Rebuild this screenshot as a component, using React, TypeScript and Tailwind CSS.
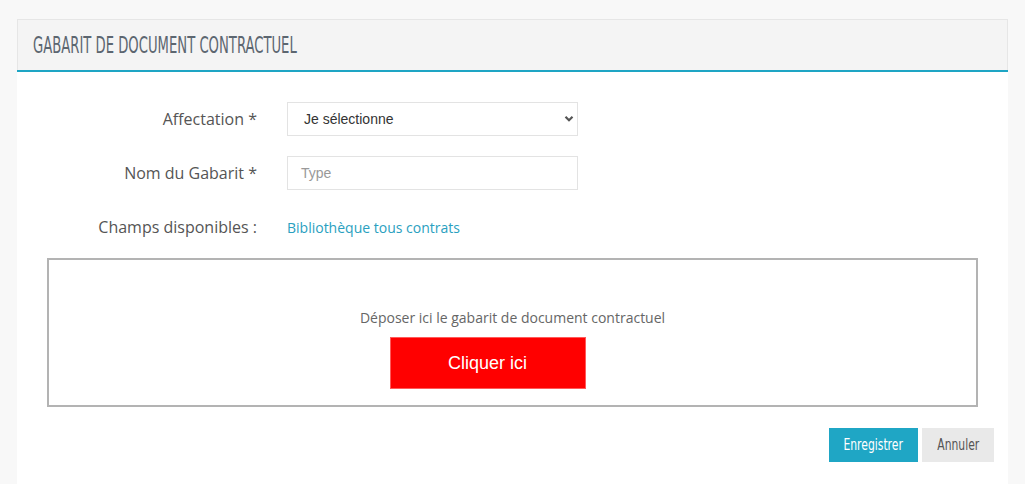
import React from "react";

const oswald = { fontFamily: '"DejaVu Sans Condensed", "Liberation Sans Narrow", "Liberation Sans", sans-serif' };

export default function App() {
  return (
    <div className="min-h-[484px] bg-[#f8f8f8] pt-[19px] pl-[17px] pr-[17px]" style={{ fontFamily: '"Open Sans", sans-serif' }}>
      <div className="bg-white h-[465px] flex flex-col">
        <div className="h-[51px] bg-[#f4f4f4] border border-[#e6e6e6] border-b-0 flex items-center pl-[15px]">
          <span className="text-[23px] font-light text-[#5c6670] origin-left scale-x-[0.637] inline-block whitespace-nowrap" style={oswald}>
            GABARIT DE DOCUMENT CONTRACTUEL
          </span>
        </div>
        <div className="h-[2px] bg-[#1ea5c4]" />
        <div className="flex flex-col pt-[30px]">
          <div className="flex items-center h-[34px]">
            <div className="w-[240px] text-right text-[16px] text-[#555]">Affectation *</div>
            <div className="ml-[30px] relative w-[291px] h-[34px]">
              <div className="w-full h-full border border-[#e3e3e3] bg-white flex items-center pl-[16px] text-[14px] text-[#333]" style={{ fontFamily: '"Liberation Sans", Arial, sans-serif' }}>
                Je sélectionne
              </div>
              <svg className="absolute right-[4px] top-[13px]" width="10" height="8" viewBox="0 0 10 8">
                <path d="M1.5 1.8 L5 5.3 L8.5 1.8" fill="none" stroke="#555" strokeWidth="2.2" />
              </svg>
            </div>
          </div>
          <div className="flex items-center h-[34px] mt-[20px]">
            <div className="w-[240px] text-right text-[16px] text-[#555]">Nom du Gabarit *</div>
            <div className="ml-[30px] w-[291px] h-[34px] border border-[#e3e3e3] bg-white flex items-center pl-[13px] text-[14px] text-[#999]" style={{ fontFamily: '"Liberation Sans", Arial, sans-serif' }}>
              Type
            </div>
          </div>
          <div className="flex items-center h-[34px] mt-[20px]">
            <div className="w-[240px] text-right text-[16px] text-[#555]">Champs disponibles :</div>
            <a className="ml-[30px] text-[14px] text-[#2a9fc0]">Bibliothèque tous contrats</a>
          </div>
          <div className="mx-[30px] mt-[14px] h-[149px] border-2 border-[#b3b3b3] flex flex-col items-center pt-[48px]">
            <div className="text-[14px] text-[#666] leading-[20px]">Déposer ici le gabarit de document contractuel</div>
            <div className="mt-[9px] mr-[50px] w-[196px] h-[52px] bg-[#ff0000] border border-[#ff5a5a] flex items-center justify-center text-white text-[18px]" style={{ fontFamily: '"Liberation Sans", Arial, sans-serif' }}>
              Cliquer ici
            </div>
          </div>
          <div className="flex justify-end gap-[4px] mt-[21px] pr-[14px]">
            <div className="w-[89px] h-[34px] bg-[#1fa6c5] text-white flex items-center justify-center text-[15px]" style={oswald}>
              <span className="inline-block scale-x-[0.8]">Enregistrer</span>
            </div>
            <div className="w-[72px] h-[34px] bg-[#e9e9e9] text-[#555] flex items-center justify-center text-[15px]" style={oswald}>
              <span className="inline-block scale-x-[0.8]">Annuler</span>
            </div>
          </div>
        </div>
      </div>
    </div>
  );
}
